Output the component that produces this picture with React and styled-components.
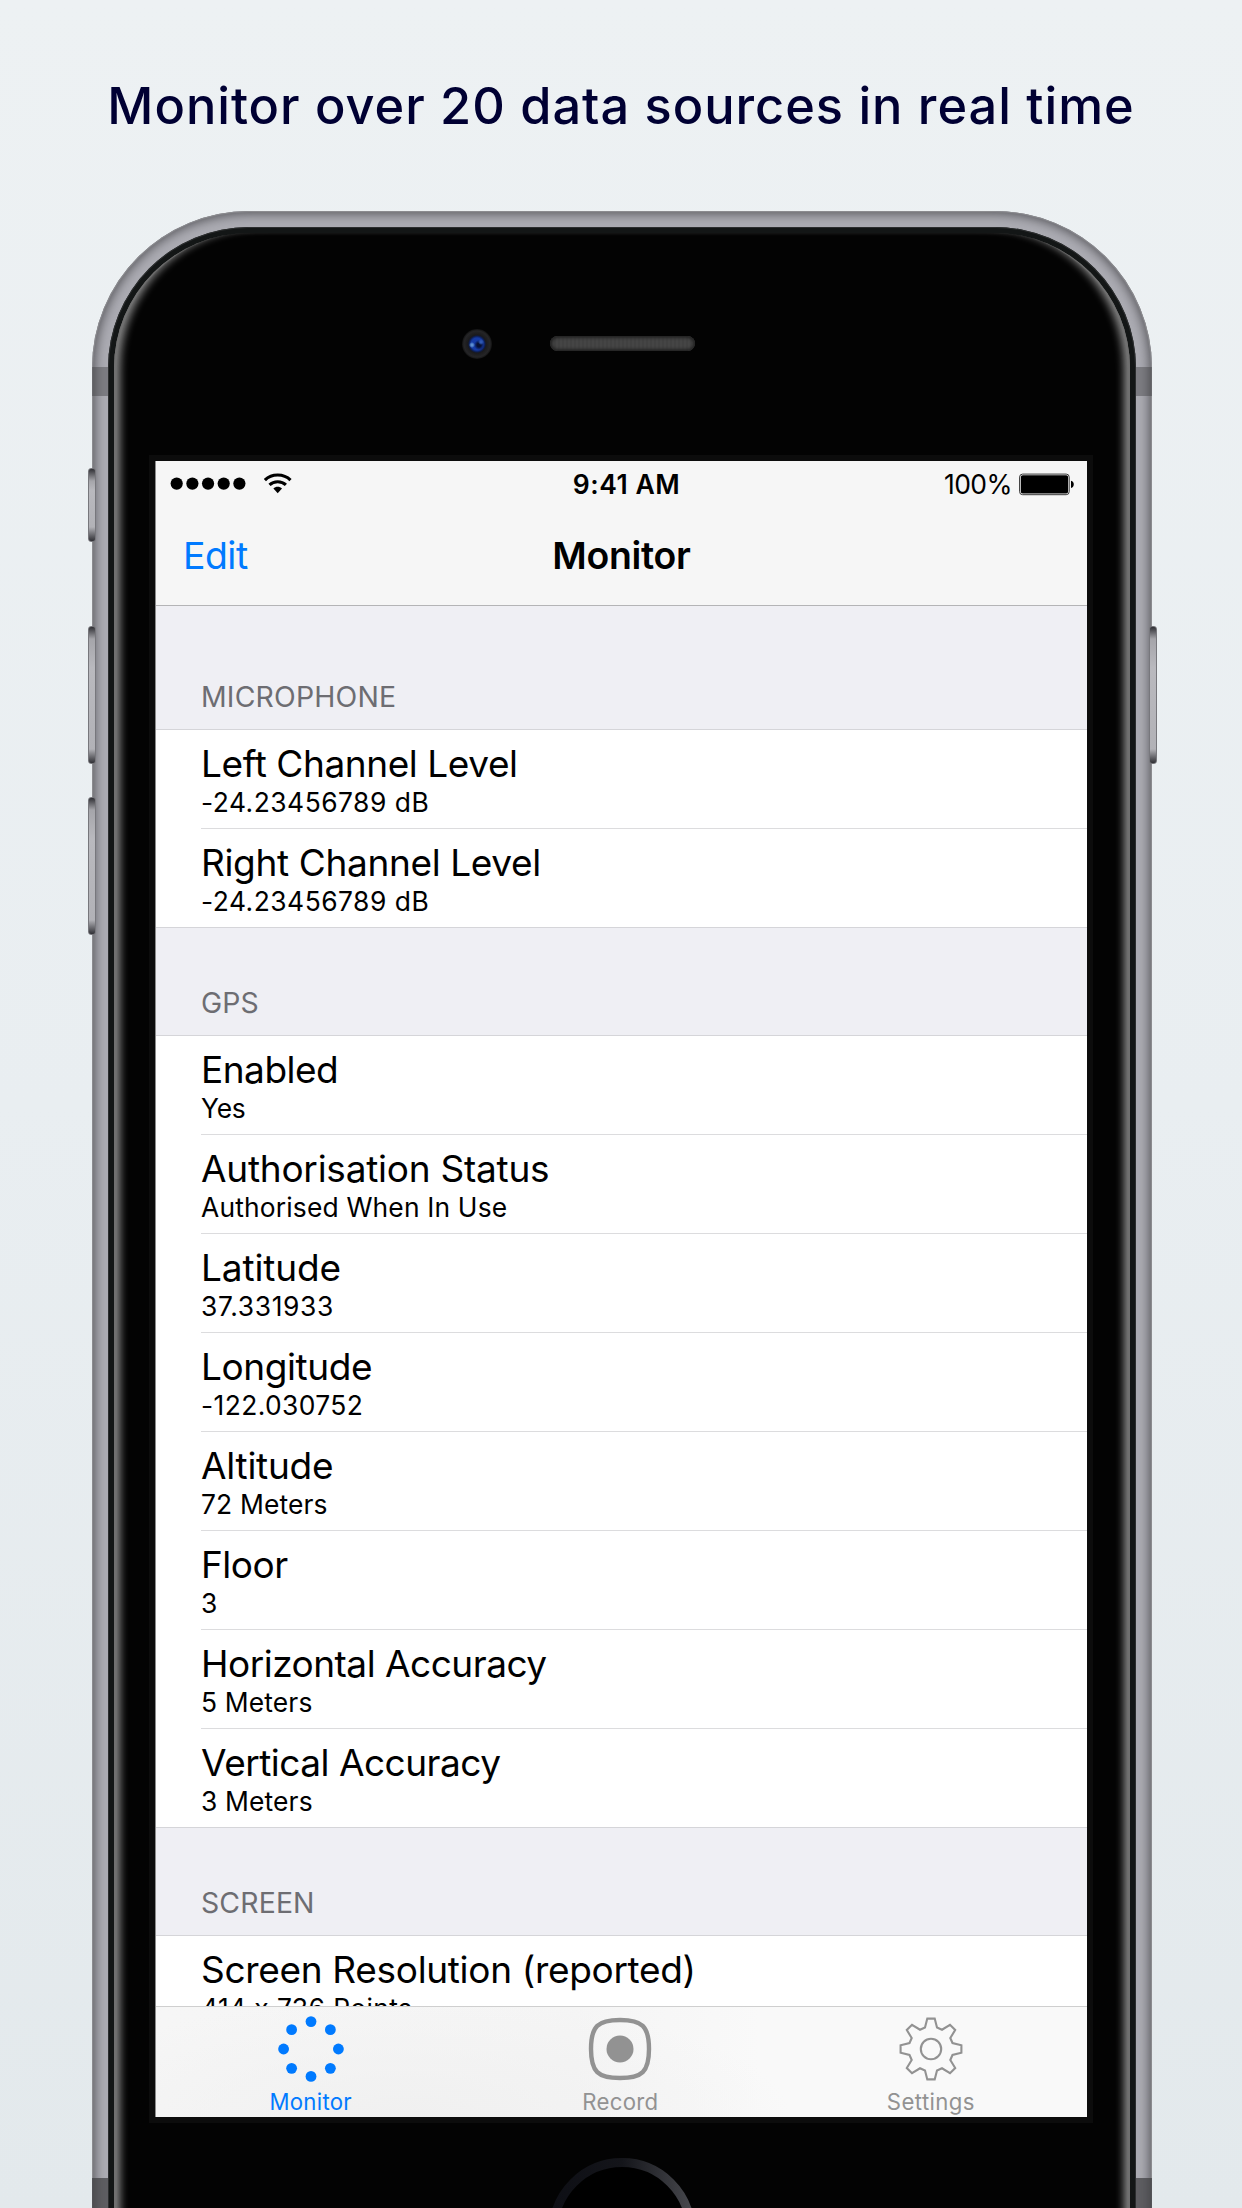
import React from "react";
import styled, { createGlobalStyle } from "styled-components";

const GlobalStyle = createGlobalStyle`
  * { box-sizing: border-box; }
  body {
    margin: 0;
    font-family: Inter, "Liberation Sans", sans-serif;
    color: #000;
  }
`;

const Page = styled.main`
  width: 1242px;
  height: 2208px;
  overflow: hidden;
  background: linear-gradient(#edf1f3, #e9eef1 50%, #e3e9ec);
`;

const Headline = styled.h1`
  margin: 0;
  height: 211px;
  padding-top: 75px;
  text-align: center;
  font-size: 50.5px;
  line-height: 61px;
  font-weight: 500;
  letter-spacing: ${(p) => p.$track}px;
  white-space: nowrap;
  color: #000033;
`;

const Phone = styled.div`
  position: relative;
  width: 1060px;
  height: 2200px;
  margin-left: 92px;
  padding: 16px;
  border-radius: 157px;
  background: #acacb3;
  box-shadow: inset 0 0 1px 1px #8e8e92, inset 0 0 12px 2px #4c4c51;
`;

const SideButton = styled.div`
  position: absolute;
  top: ${(p) => p.$top}px;
  ${(p) => (p.$right ? "right: -5px;" : "left: -4px;")}
  width: 8px;
  height: ${(p) => p.$height}px;
  border-radius: 3px;
  border: 1px solid #77777c;
  background: linear-gradient(
    #303035, #a5a5aa 12px, #b9b9be 30%, #b2b2b7 calc(100% - 14px), #303035
  );
`;

const AntennaBand = styled.div`
  position: absolute;
  top: ${(p) => p.$top}px;
  ${(p) => (p.$right ? "right: 0;" : "left: 0;")}
  width: 16px;
  height: ${(p) => p.$height}px;
  background: rgba(60, 60, 63, ${(p) => p.$strength});
`;

const Glass = styled.div`
  position: relative;
  height: 100%;
  padding: 6px;
  border-radius: 141px;
  background: #131616;
  box-shadow: inset 0 0 0 1px #2c2e2f;
`;

const Face = styled.div`
  height: 100%;
  border-radius: 135px;
  background: #030303;
  box-shadow: inset 3px 0 1px -1px #707070, inset -3px 0 1px -1px #707070,
    inset 12px 0 9px -6px #8a8a8a, inset -12px 0 9px -6px #8a8a8a;
  padding-left: 41px;
`;

const SensorBar = styled.div`
  height: 228px;
  padding: 95px 0 0 307px;
  display: flex;
  align-items: flex-start;
  gap: 58px;
`;

const Camera = styled.div`
  width: 30px;
  height: 30px;
  margin-top: 1px;
  border-radius: 50%;
  background:
    radial-gradient(circle at 10px 16px, #5d8fd0 0 1px, transparent 3px),
    radial-gradient(circle at 19px 13px, #2f58b0 0 1px, transparent 3px),
    radial-gradient(circle at 17px 16px, #071033 0 2px, transparent 5px),
    radial-gradient(circle, #153aa5 0 6px, #0d1c4c 8px, #1a1a1c 9px, #252527 13px, #121212 15px);
`;

const Speaker = styled.div`
  width: 145px;
  height: 15px;
  margin-top: 8px;
  border-radius: 8px;
  background: repeating-linear-gradient(90deg, #414141 0 2px, #454545 2px 4px);
  box-shadow: inset 0 0 3px 2px #222;
`;

const Screen = styled.section`
  width: 932px;
  height: 1656px;
  border-left: 1px solid #8c8c8c;
  box-shadow: 0 0 0 6px #0c0c0c;
  background: #efeff4;
  display: flex;
  flex-direction: column;
  overflow: hidden;
`;

const TopBar = styled.header`
  flex: none;
  height: 145px;
  background: #f6f6f6;
  border-bottom: 1px solid #b4b4b6;
`;

const StatusBar = styled.div`
  height: 45px;
  display: grid;
  grid-template-columns: 1fr auto 1fr;
  align-items: center;
  padding: 1px 12px 0 14px;
  font-size: 26.5px;
  line-height: 32px;
`;

const Signal = styled.div`
  display: flex;
  align-items: center;
  gap: 18px;
`;

const Clock = styled.div`
  font-weight: 560;
  letter-spacing: ${(p) => p.$track}px;
  padding-left: 8px;
`;

const Power = styled.div`
  display: flex;
  justify-content: flex-end;
  align-items: center;
  gap: 7px;
  letter-spacing: ${(p) => p.$track}px;
`;

const NavBar = styled.div`
  height: 99px;
  display: grid;
  grid-template-columns: 1fr auto 1fr;
  align-items: center;
  padding: 1px 27px 0 27px;
  font-size: 37.4px;
  line-height: 46px;
`;

const EditButton = styled.a`
  color: #007aff;
  letter-spacing: ${(p) => p.$track}px;
`;

const NavTitle = styled.div`
  font-weight: 600;
  letter-spacing: ${(p) => p.$track}px;
`;

const List = styled.div`
  flex: 1;
  min-height: 0;
  overflow: hidden;
`;

const GroupTitle = styled.h2`
  margin: 0;
  height: ${(p) => p.$height}px;
  padding: 0 0 15.3px 45px;
  display: flex;
  align-items: flex-end;
  font-size: 28.4px;
  line-height: 34px;
  font-weight: 400;
  letter-spacing: ${(p) => p.$track}px;
  color: #6d6d72;
`;

const Group = styled.div`
  background: #fff;
  box-shadow: inset 0 1px #d5d5d9, 0 1px #d5d5d9;
`;

const Row = styled.div`
  height: 98.95px;
  margin-left: 45px;
  padding-top: 12px;
  white-space: nowrap;

  & + & {
    box-shadow: inset 0 1px #dcdcde;
  }
`;

const Name = styled.div`
  font-size: 37px;
  line-height: 46px;
  letter-spacing: ${(p) => p.$track}px;
`;

const Value = styled.div`
  font-size: 26.4px;
  line-height: 31px;
  letter-spacing: ${(p) => p.$track}px;
`;

const TabBar = styled.nav`
  flex: none;
  height: 111px;
  display: grid;
  grid-template-columns: 309.4px 310px 311px;
  border-top: 1px solid #cfcfcf;
  background: radial-gradient(ellipse 380px 120px at 255px 110px, #f0f0f0, rgba(240, 240, 240, 0)), linear-gradient(90deg, #f6f6f6, #f5f5f5 45%, #f9f9f9 65%);
`;

const Tab = styled.div`
  display: flex;
  flex-direction: column;
  align-items: center;
  padding-top: 8px;
  color: ${(p) => (p.$active ? "#007aff" : "#929292")};

  svg { display: block; }
`;

const TabLabel = styled.span`
  margin-top: 5px;
  font-size: 22.2px;
  line-height: 28px;
  letter-spacing: ${(p) => p.$track}px;
`;

const HomeButton = styled.div`
  margin: 40px 0 0 393px;
`;

const groups = [
  {
    title: "MICROPHONE", track: 0.2, height: 123.1,
    rows: [
      ["Left Channel Level", "-24.23456789 dB", -0.42, 0.5],
      ["Right Channel Level", "-24.23456789 dB", -0.35, 0.5],
    ],
  },
  {
    title: "GPS", track: 0.1, height: 108.4,
    rows: [
      ["Enabled", "Yes", -0.5, -0.2],
      ["Authorisation Status", "Authorised When In Use", -0.24, 0.17],
      ["Latitude", "37.331933", -0.12, 0.65],
      ["Longitude", "-122.030752", -0.4, 0.4],
      ["Altitude", "72 Meters", -0.25, 0.15],
      ["Floor", "3", -0.5, 0.4],
      ["Horizontal Accuracy", "5 Meters", -0.5, 0.15],
      ["Vertical Accuracy", "3 Meters", -0.5, 0.15],
    ],
  },
  {
    title: "SCREEN", track: 0.15, height: 108.2,
    rows: [["Screen Resolution (reported)", "414 x 736 Points", -0.32, 0.4]],
  },
];

const SignalDots = () => (
  <svg width="76" height="14" viewBox="0 0 76 14">
    {[0, 1, 2, 3, 4].map((i) => (
      <circle key={i} cx={6.7 + i * 15.67} cy="6.6" r="6.1" />
    ))}
  </svg>
);

const Wifi = () => (
  <svg width="28" height="22" viewBox="0 0 28 22">
    <g fill="none" stroke="#000" strokeWidth="3.1">
      <path d="M0.9 7.1 C7.7 0.3 19.7 0.3 26.5 7.1" />
      <path d="M5.5 11.9 C9.9 7.7 17.5 7.7 21.9 11.9" />
    </g>
    <path d="M9.4 15.5 C11.7 13.3 15.7 13.3 18 15.5 L13.7 20.2 Z" />
  </svg>
);

const Battery = () => (
  <svg width="56" height="23" viewBox="0 0 56 23">
    <rect x="0.6" y="1.1" width="49.6" height="20.6" rx="3" fill="#fff" stroke="#333" strokeWidth="1" />
    <rect x="1.8" y="2.2" width="47.3" height="18.4" rx="1.8" />
    <path d="M52 7.8 C55.7 8.4 55.7 14.4 52 15 Z" />
  </svg>
);

const MonitorIcon = () => (
  <svg width="68" height="68" viewBox="-34 -34 68 68" fill="currentColor">
    {[0, 1, 2, 3, 4, 5, 6, 7].map((i) => {
      const a = (i * Math.PI) / 4;
      return <circle key={i} cx={27.4 * Math.cos(a)} cy={27.4 * Math.sin(a)} r="5.4" />;
    })}
  </svg>
);

const RecordIcon = () => (
  <svg width="68" height="68" viewBox="-34 -34 68 68" fill="none" stroke="currentColor" strokeWidth="4.4">
    <path d="M0 -29 C22 -29 29 -23 29 0 C29 23 22 29 0 29 C-22 29 -29 23 -29 0 C-29 -23 -22 -29 0 -29 Z" />
    <circle r="13.5" fill="currentColor" stroke="none" />
  </svg>
);

const SettingsIcon = () => (
  <svg width="68" height="68" viewBox="-34 -34 68 68" fill="none" stroke="currentColor" strokeWidth="2.1">
    <path d="M-3.7 -30.4 H3.7 L6 -21.5 L11 -19.3 L19 -24.2 L24.2 -19 L19.3 -11 L21.5 -6 L30.4 -3.7 V3.7 L21.5 6 L19.3 11 L24.2 19 L19 24.2 L11 19.3 L6 21.5 L3.7 30.4 H-3.7 L-6 21.5 L-11 19.3 L-19 24.2 L-24.2 19 L-19.3 11 L-21.5 6 L-30.4 3.7 V-3.7 L-21.5 -6 L-19.3 -11 L-24.2 -19 L-19 -24.2 L-11 -19.3 L-6 -21.5 Z" />
    <circle r="10.2" />
  </svg>
);

const HomeRing = () => (
  <svg width="148" height="148" viewBox="0 0 148 148">
    <defs>
      <linearGradient id="ring">
        <stop offset="0" stopColor="#0e0f15" />
        <stop offset="0.5" stopColor="#14151a" />
        <stop offset="1" stopColor="#46474c" />
      </linearGradient>
    </defs>
    <circle cx="74" cy="74" r="68.5" fill="#000" stroke="url(#ring)" strokeWidth="9" />
  </svg>
);

export default function App() {
  return (
    <Page>
      <GlobalStyle />
      <Headline $track={0.97}>Monitor over 20 data sources in real time</Headline>
      <Phone>
        <SideButton $top={257} $height={74} />
        <SideButton $top={415} $height={138} />
        <SideButton $top={586} $height={138} />
        <SideButton $right $top={415} $height={138} />
        <AntennaBand $top={156} $height={29} $strength={0.42} />
        <AntennaBand $right $top={156} $height={29} $strength={0.42} />
        <AntennaBand $top={1967} $height={30} $strength={0.7} />
        <AntennaBand $right $top={1967} $height={30} $strength={0.7} />
        <Glass>
          <Face>
            <SensorBar>
              <Camera />
              <Speaker />
            </SensorBar>
            <Screen>
              <TopBar>
                <StatusBar>
                  <Signal>
                    <SignalDots />
                    <Wifi />
                  </Signal>
                  <Clock $track={0.55}>9:41 AM</Clock>
                  <Power $track={-0.55}>
                    100%
                    <Battery />
                  </Power>
                </StatusBar>
                <NavBar>
                  <EditButton $track={-0.5}>Edit</EditButton>
                  <NavTitle $track={-0.3}>Monitor</NavTitle>
                </NavBar>
              </TopBar>
              <List>
                {groups.map((g) => (
                  <React.Fragment key={g.title}>
                    <GroupTitle $height={g.height} $track={g.track}>{g.title}</GroupTitle>
                    <Group>
                      {g.rows.map(([name, value, nameTrack, valueTrack]) => (
                        <Row key={name}>
                          <Name $track={nameTrack}>{name}</Name>
                          <Value $track={valueTrack}>{value}</Value>
                        </Row>
                      ))}
                    </Group>
                  </React.Fragment>
                ))}
              </List>
              <TabBar>
                <Tab $active>
                  <MonitorIcon />
                  <TabLabel $track={0.3}>Monitor</TabLabel>
                </Tab>
                <Tab>
                  <RecordIcon />
                  <TabLabel $track={0.3}>Record</TabLabel>
                </Tab>
                <Tab>
                  <SettingsIcon />
                  <TabLabel $track={0.4}>Settings</TabLabel>
                </Tab>
              </TabBar>
            </Screen>
            <HomeButton>
              <HomeRing />
            </HomeButton>
          </Face>
        </Glass>
      </Phone>
    </Page>
  );
}
